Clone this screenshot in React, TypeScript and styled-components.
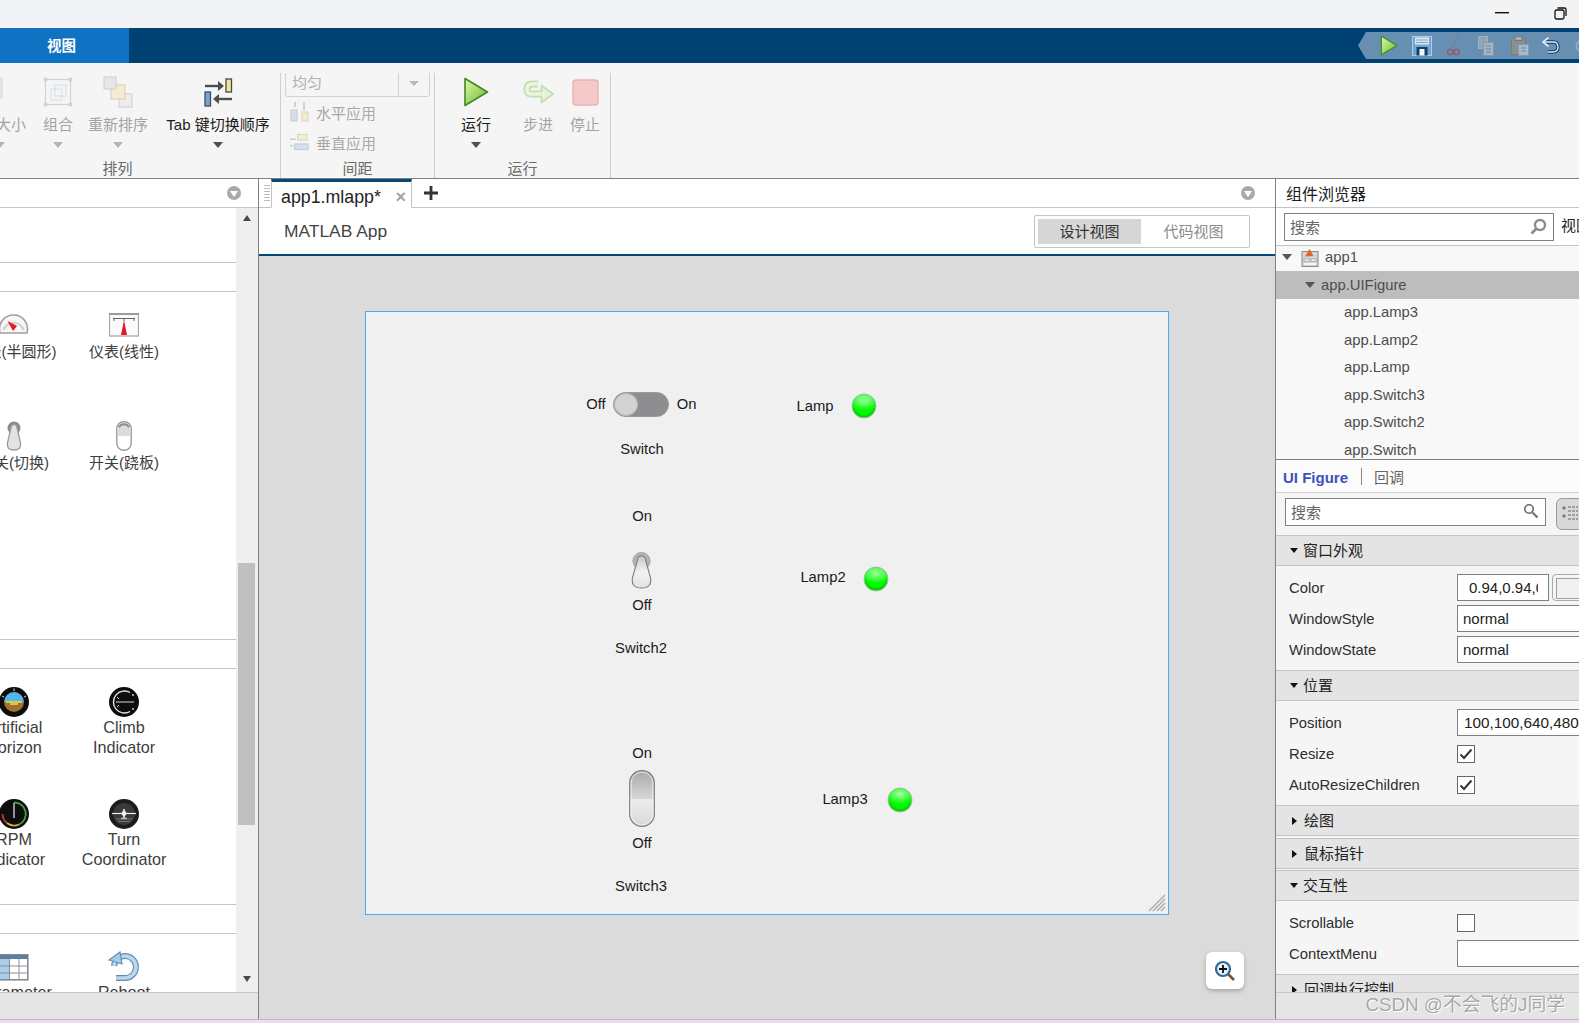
import React from "react";
import styled, { createGlobalStyle } from "styled-components";

const FONT = `"Liberation Sans", "Noto Sans CJK SC", sans-serif`;

const Global = createGlobalStyle`
  html, body { margin: 0; padding: 0; background: #f2f2f4; }
  * { box-sizing: border-box; }
  body { font-family: ${FONT}; }
`;

const Page = styled.div`
  width: 1579px; height: 1023px; overflow: hidden; position: relative;
  display: flex; flex-direction: column; background: #f2f2f4;
`;
const TitleBar = styled.div`
  height: 28px; flex: none; display: flex; justify-content: flex-end; align-items: flex-start;
  background: #f2f3f5;
`;
const WinBtn = styled.div<{ $w: number }>`
  width: ${p => p.$w}px; height: 26px; display: flex; align-items: center; justify-content: center;
`;
const TabBand = styled.div`
  height: 35px; flex: none; background: #004174; display: flex; align-items: stretch; justify-content: space-between;
`;
const RibbonTab = styled.div`
  width: 129px; padding: 0 0 2px 47px; display: flex; align-items: center;
  background: #0f72c2; color: #fff; font-size: 14.5px; font-weight: 700;
`;
const Quick = styled.div`
  width: 221px; height: 27px; margin-top: 4px; background: #668fb2;
  clip-path: polygon(8px 0, 100% 0, 100% 100%, 8px 100%, 0 50%);
  display: flex; align-items: center; padding-left: 22px; overflow: hidden;
`;
const QuickIcon = styled.div<{ $w: number }>`
  width: ${p => p.$w}px; flex: none; display: flex; align-items: center; justify-content: flex-start;
`;
const Ribbon = styled.div`
  height: 116px; flex: none; background: #f5f5f5; border-bottom: 1px solid #808080;
  display: flex; align-items: flex-start;
`;
const Group = styled.div<{ $w: number }>`
  width: ${p => p.$w}px; height: 105px; margin-top: 10px; flex: none;
  border-right: 1px solid #cfcfcf; display: flex; flex-direction: column; overflow: hidden;
`;
const GroupBody = styled.div<{ $end?: boolean }>`
  height: 86px; flex: none; display: flex; align-items: flex-start;
  justify-content: ${p => (p.$end ? "flex-end" : "flex-start")};
`;
const GroupLabel = styled.div<{ $pr?: number }>`
  height: 19px; line-height: 19px; text-align: center; font-size: 15px; color: #6b6b6b;
  padding-right: ${p => p.$pr || 0}px;
`;
const Tool = styled.div<{ $w: number; $off?: boolean }>`
  width: ${p => p.$w}px; flex: none; display: flex; flex-direction: column; align-items: center;
  padding-top: 4px; font-size: 15px; color: ${p => (p.$off ? "#a3a3a3" : "#1c1c1c")};
`;
const ToolIcon = styled.div`
  height: 30px; display: flex; align-items: center; justify-content: center;
`;
const ToolText = styled.div`
  height: 22px; line-height: 22px; margin-top: 7px; white-space: nowrap;
`;
const Caret = styled.div<{ $off?: boolean; $dx?: number }>`
  width: 0; height: 0; margin-top: 6px; margin-left: ${p => p.$dx || 0}px;
  border-left: 5px solid transparent; border-right: 5px solid transparent;
  border-top: 6px solid ${p => (p.$off ? "#b5b5b5" : "#505050")};
`;
const SpacingCol = styled.div`
  padding: 0 0 0 4px; width: 100%; display: flex; flex-direction: column;
`;
const Combo = styled.div`
  width: 145px; height: 28px; margin-top: -4px; border: 1px solid #d2d2d2; border-radius: 3px;
  display: flex; align-items: center; color: #b0b0b0; font-size: 15px;
`;
const ComboText = styled.div`
  flex: 1; padding-left: 6px; border-right: 1px solid #d2d2d2; height: 100%; line-height: 26px;
`;
const ComboCaret = styled.div`
  width: 30px; display: flex; justify-content: center;
  &::after { content: ""; border-left: 5px solid transparent; border-right: 5px solid transparent; border-top: 5px solid #b8b8b8; }
`;
const SpaceRow = styled.div`
  height: 30px; display: flex; align-items: center; gap: 7px; padding-left: 5px; color: #a8a8a8; font-size: 15px;
  &:first-of-type { margin-top: 2px; }
`;

const Main = styled.div`
  height: 840px; flex: none; display: flex; background: #fff;
`;
const LeftPanel = styled.div`
  width: 259px; flex: none; border-right: 1px solid #808080; display: flex; flex-direction: column;
`;
const PanelHead = styled.div`
  height: 29px; flex: none; border-bottom: 1px solid #c4c4c4; display: flex; align-items: center; justify-content: flex-end;
  padding-right: 17px; background: #fff;
`;
const DropDot = styled.div`
  width: 14px; height: 14px; border-radius: 50%; background: #a9a9a9; display: flex; align-items: center; justify-content: center;
  &::after { content: ""; margin-top: 2px; border-left: 4px solid transparent; border-right: 4px solid transparent; border-top: 6px solid #fff; }
`;
const LeftBody = styled.div`
  flex: 1; min-height: 0; display: flex;
`;
const Palette = styled.div`
  width: 236px; flex: none; overflow: hidden; display: flex; flex-direction: column; background: #fff;
`;
const Band = styled.div<{ $h: number }>`
  height: ${p => p.$h}px; flex: none; border-bottom: 1px solid #c4c4c4;
`;
const Shelf = styled.div<{ $h: number; $row: number }>`
  width: 277px; margin-left: -41px; height: ${p => p.$h}px; flex: none; border-bottom: 1px solid #c4c4c4; padding-top: 18px; overflow: hidden;
  display: grid; grid-template-columns: 110px 110px; grid-auto-rows: ${p => p.$row}px;
`;
const Part = styled.div`
  display: flex; flex-direction: column; align-items: center; color: #3d3d3d;
`;
const PartIcon = styled.div`
  height: 30px; display: flex; align-items: center; justify-content: center;
`;
const PartLabel = styled.div<{ $latin?: boolean }>`
  margin-top: ${p => (p.$latin ? 0 : 2)}px; line-height: 20px; text-align: center; white-space: pre-line; font-size: ${p => (p.$latin ? 16.2 : 15)}px;
`;
const ScrollBar = styled.div`
  width: 22px; flex: none; background: #efefef; padding: 0 3px 0 2px; display: flex; flex-direction: column; align-items: center; position: relative;
`;
const ScrollArrow = styled.div<{ $down?: boolean }>`
  width: 0; height: 0; flex: none; border-left: 4.5px solid transparent; border-right: 4.5px solid transparent;
  ${p => (p.$down ? "border-top: 6px solid #4a4a4a;" : "border-bottom: 6px solid #4a4a4a;")}
  margin-top: ${p => (p.$down ? 151 : 7)}px;
`;
const ScrollThumb = styled.div`
  width: 17px; height: 262px; flex: none; margin-top: 342px; background: #c0c0c0;
`;
const StatusBar = styled.div`
  height: 27px; flex: none; background: #e5e5e5; border-top: 1px solid #c8c8c8;
`;

const Center = styled.div`
  flex: 1; min-width: 0; display: flex; flex-direction: column; background: #dbdbdb;
`;
const TabBar = styled.div`
  height: 29px; flex: none; background: #fff; border-bottom: 1px solid #c4c4c4; display: flex; align-items: stretch; padding-left: 3px;
`;
const Grip = styled.div`
  width: 9px; margin-right: 0; background: repeating-linear-gradient(#bdbdbd 0 1px, transparent 1px 3px) center 6px / 6px 16px no-repeat;
`;
const DocTab = styled.div`
  width: 141px; height: 29px; border: 1px solid #c4c4c4; border-bottom: 1px solid #fff; border-top: 3px solid #004a7c; display: flex; align-items: center;
  padding: 5px 5px 0 9px; font-size: 17.8px; color: #222; justify-content: space-between; white-space: nowrap;
`;
const DocClose = styled.span`
  font-size: 18px; line-height: 18px; color: #a4a4a4; font-weight: 700;
`;
const Plus = styled.div`
  width: 38px; display: flex; align-items: center; justify-content: center;
`;
const TabSpacer = styled.div`
  flex: 1; display: flex; justify-content: flex-end; align-items: center; padding-right: 20px;
`;
const AppHead = styled.div`
  height: 48px; flex: none; background: #fff; border-bottom: 2px solid #004a7c; display: flex; align-items: center; justify-content: space-between;
  padding: 0 25px; color: #444; font-size: 17.4px;
`;
const ViewSwitch = styled.div`
  width: 216px; height: 33px; border: 1px solid #c4c4c4; border-radius: 2px; padding: 3px; display: flex; font-size: 15px; background: #fff;
`;
const ViewBtn = styled.div<{ $on?: boolean }>`
  width: 103px; display: flex; align-items: center; justify-content: center; padding-bottom: 2px;
  background: ${p => (p.$on ? "#d6d6d6" : "transparent")}; color: ${p => (p.$on ? "#333" : "#8c8c8c")};
  &:last-child { flex: 1; }
`;
const Stage = styled.div`
  flex: 1; min-height: 0; padding: 55px 107px 0 106px; position: relative;
`;
const Figure = styled.div`
  width: 804px; height: 604px; border: 1px solid #4ba9ef; background: #f0f0f0; position: relative;
`;
const CanvasText = styled.div<{ $x: number; $y: number }>`
  position: absolute; left: ${p => p.$x}px; top: ${p => p.$y}px; transform: translate(-50%, -50%);
  font-size: 14.8px; color: #1a1a1a; white-space: nowrap;
`;
const Lamp = styled.div<{ $x: number; $y: number }>`
  position: absolute; left: ${p => p.$x}px; top: ${p => p.$y}px; transform: translate(-50%, -50%);
  width: 25px; height: 25px; border-radius: 50%; border: 1px solid #b3b8b3;
  background: radial-gradient(ellipse 72% 46% at 50% 24%, #a8ffa8 0%, #30ff30 65%, #00f800 100%), #00f000;
  box-shadow: inset 0 -2px 2px #00c800;
`;
const Slide = styled.div<{ $x: number; $y: number }>`
  position: absolute; left: ${p => p.$x}px; top: ${p => p.$y}px;
  width: 56px; height: 25px; border-radius: 13px; background: #8e8e91; border: 1px solid #9a9a9a;
`;
const SlideKnob = styled.div`
  width: 24px; height: 23px; border-radius: 50%; background: #d2d2d4; border: 1px solid #b5b5b5;
`;
const Placed = styled.div<{ $x: number; $y: number }>`
  position: absolute; left: ${p => p.$x}px; top: ${p => p.$y}px; line-height: 0;
`;
const Grab = styled.div`
  position: absolute; right: 2px; bottom: 2px; line-height: 0;
`;
const ZoomBtn = styled.div`
  position: absolute; left: 947px; top: 696px; width: 38px; height: 37px; border-radius: 6px; background: #fff;
  box-shadow: 0 2px 4px rgba(0,0,0,.25); display: flex; align-items: center; justify-content: center;
`;

const RightPanel = styled.div`
  width: 304px; flex: none; border-left: 1px solid #808080; display: flex; flex-direction: column; background: #f5f5f5; overflow: hidden;
`;
const BrowserHead = styled.div`
  height: 29px; flex: none; background: #fff; border-bottom: 1px solid #c4c4c4; padding: 0 0 0 10px; display: flex; align-items: center;
  font-size: 16px; color: #1c1c1c;
`;
const SearchRow = styled.div`
  height: 38px; flex: none; background: #fff; border-bottom: 1px solid #c4c4c4; padding: 5px 0 0 8px; display: flex; gap: 7px; font-size: 15px;
`;
const SearchBox = styled.div<{ $w: number }>`
  width: ${p => p.$w}px; height: 28px; flex: none; border: 1px solid #808080; background: #fff; display: flex; align-items: center; justify-content: space-between;
  padding: 0 6px 2px 5px; color: #666; font-size: 15px;
`;
const ViewLabel = styled.div`
  color: #222; line-height: 26px; white-space: nowrap;
`;
const Tree = styled.div`
  height: 214px; flex: none; overflow: hidden; background: #f8f8f8; border-bottom: 1px solid #808080;
`;
const TreeRow = styled.div<{ $pad: number; $sel?: boolean; $h?: number }>`
  height: ${p => p.$h || 27.5}px; display: flex; align-items: center; gap: 6px; padding: ${p => (p.$h ? "0 0 3px" : "0")} 0 ${p => (p.$h ? "" : "0")};
  padding-left: ${p => p.$pad}px;
  font-size: 14.8px; color: #4d4d4d; background: ${p => (p.$sel ? "#bdbdbd" : "transparent")};
`;
const TreeCaret = styled.div`
  width: 0; height: 0; border-left: 5px solid transparent; border-right: 5px solid transparent; border-top: 6px solid #555;
`;
const NodeIcon = styled.div`
  margin-left: 3px; line-height: 0;
`;
const InspectTabs = styled.div`
  height: 33px; flex: none; background: #fcfcfc; border-bottom: 1px solid #d0d0d0; display: flex; align-items: center; padding-left: 7px; font-size: 15px;
`;
const TabOn = styled.div`
  color: #3c50bd; font-weight: 700; padding: 2px 13px 0 0; border-right: 1px solid #888; line-height: 15px;
`;
const TabOff = styled.div`
  color: #666; padding-left: 12px;
`;
const InspectSearch = styled.div`
  height: 42px; flex: none; padding: 5px 0 0 9px; display: flex; gap: 10px; background: #f5f5f5;
`;
const LayoutBtn = styled.div`
  width: 40px; height: 32px; flex: none; border: 1px solid #9a9a9a; border-radius: 6px; background: #d8d8d8; display: flex; align-items: center; padding-left: 5px;
`;
const Section = styled.div<{ $gap?: number }>`
  height: 31px; flex: none; background: #e4e4e4; border-top: 1px solid #c4c4c4; border-bottom: 1px solid #c4c4c4; display: flex; align-items: center; gap: 5px;
  padding: 0 0 3px 14px; font-size: 15px; color: #222; margin-bottom: ${p => p.$gap || 0}px;
`;
const Tri = styled.div<{ $open: boolean }>`
  width: 0; height: 0; flex: none; margin-top: 3px;
  ${p => p.$open
    ? "border-left: 4px solid transparent; border-right: 4px solid transparent; border-top: 5px solid #111;"
    : "margin-left: 2px; margin-right: 2px; border-top: 4.5px solid transparent; border-bottom: 4.5px solid transparent; border-left: 5px solid #111;"}
`;
const PropList = styled.div`
  flex: none; padding: 8px 0 7px 13px; display: flex; flex-direction: column; gap: 4px;
`;
const Prop = styled.div`
  height: 27px; display: grid; grid-template-columns: 168px 1fr; align-items: center; font-size: 14.8px; color: #2e2e2e;
`;
const ValueWrap = styled.div`
  display: flex; gap: 3px; height: 27px; align-items: stretch;
`;
const Value = styled.div<{ $w?: number; $pad?: number; $fs?: number }>`
  width: ${p => p.$w || 140}px; flex: none; border: 1px solid #808080; background: #fff; color: #222; white-space: nowrap;
  line-height: 25px; padding: 0 10px 0 ${p => p.$pad ?? 5}px; font-size: ${p => p.$fs || 15}px;
`;
const ClipText = styled.div`
  overflow: hidden;
`;
const Swatch = styled.div`
  width: 34px; flex: none; border: 1px solid #aaa; border-radius: 4px; padding: 3px 0 3px 3px; background: #f5f5f5;
  &::after { content: ""; display: block; width: 22px; height: 100%; border: 1px solid #a0a0a0; background: #f0f0f0; }
`;
const Check = styled.div`
  width: 18px; height: 18px; border: 1px solid #666; background: #fff; display: flex; align-items: center; justify-content: center;
`;
const RightScroll = styled.div`
  flex: 1; min-height: 0; overflow: hidden; display: flex; flex-direction: column;
`;
const BottomRule = styled.div`
  height: 1px; flex: none; background: #b9b9b9;
`;
const BottomStrip = styled.div`
  flex: 1; background: #eedcf1;
`;
const Watermark = styled.div`
  position: absolute; right: 14px; bottom: 7px; font-size: 18.8px; color: #a6a6a6; white-space: nowrap;
  text-shadow: 0 0 1px #fff, 1px 1px 0 #fff;
`;

/* ---------- drawings ---------- */
const PlayIcon = ({ w, h, id }: { w: number; h: number; id: string }) => (
  <svg width={w} height={h} viewBox="0 0 26 30">
    <defs>
      <linearGradient id={id} x1="0" y1="0" x2="1" y2="1">
        <stop offset="0" stopColor="#e4f8a8" />
        <stop offset="1" stopColor="#62b82c" />
      </linearGradient>
    </defs>
    <path d="M2 1.5 L24.5 15 L2 28.5 Z" fill={`url(#${id})`} stroke="#3e8a24" strokeWidth="1.6" strokeLinejoin="round" />
  </svg>
);
const SizeStub = () => (
  <svg width="24" height="30" viewBox="0 0 24 30">
    <rect x="0" y="1" width="3" height="20" fill="#e6e6e6" stroke="#cfcfcf" strokeWidth=".8" />
  </svg>
);
const GroupIcon = () => (
  <svg width="30" height="30" viewBox="0 0 30 30" opacity=".6">
    <rect x="2.5" y="2.5" width="25" height="25" fill="#f2f4f6" stroke="#b4bfcc" strokeWidth="1.2" />
    {[[2.5, 2.5], [27.5, 2.5], [2.5, 27.5], [27.5, 27.5]].map(([x, y]) => (
      <rect key={`${x}${y}`} x={x - 1.8} y={y - 1.8} width="3.6" height="3.6" fill="#b0bccb" />
    ))}
    <rect x="8" y="12" width="11" height="11" fill="none" stroke="#c8cdd4" />
    <rect x="12" y="8" width="11" height="11" fill="none" stroke="#c8cdd4" />
  </svg>
);
const ReorderIcon = () => (
  <svg width="31" height="32" viewBox="0 0 31 32">
    <rect x="16" y="18" width="13" height="13" fill="#ececec" stroke="#cfcfcf" />
    <rect x="8" y="9" width="14" height="14" fill="#f4ecd0" stroke="#d8d0b0" />
    <rect x="1" y="1" width="12" height="12" fill="#e6e6e6" stroke="#cfcfcf" />
  </svg>
);
const TabOrderIcon = () => (
  <svg width="29" height="29" viewBox="0 0 29 29">
    <path d="M1 8 H15" stroke="#4d4d4d" strokeWidth="2.4" />
    <path d="M14 3 L20 8 L14 13 Z" fill="#4d4d4d" />
    <rect x="22" y="1" width="5.5" height="13" fill="#f1e2a6" stroke="#4d4a38" strokeWidth="1.3" />
    <path d="M28 21 H14" stroke="#4d4d4d" strokeWidth="2.4" />
    <path d="M15 16 L9 21 L15 26 Z" fill="#4d4d4d" />
    <rect x="1" y="14" width="5.5" height="14" fill="#7fa2c6" stroke="#34506c" strokeWidth="1.3" />
  </svg>
);
const HApplyIcon = () => (
  <svg width="19" height="20" viewBox="0 0 19 20" opacity=".55">
    <path d="M5 0 V5 M14 0 V8" stroke="#999" strokeWidth="1.4" />
    <rect x="1" y="8" width="6" height="11" fill="#bcd0e4" stroke="#93a6ba" />
    <rect x="12" y="10" width="6" height="9" fill="#f2e6b8" stroke="#c2b88e" />
  </svg>
);
const VApplyIcon = () => (
  <svg width="19" height="19" viewBox="0 0 20 19" opacity=".55">
    <path d="M0 6 H6 M0 13 H3" stroke="#999" strokeWidth="1.4" />
    <rect x="8" y="1" width="10" height="6" fill="#f2e6b8" stroke="#c2b88e" />
    <rect x="5" y="11" width="14" height="6" fill="#bcd0e4" stroke="#93a6ba" />
  </svg>
);
const StepIcon = () => (
  <svg width="31" height="27" viewBox="0 0 31 27" fill="none">
    <path d="M15 5 H9 Q4 5 4 10 V11 Q4 15 9 15 H21" stroke="#c4deb2" strokeWidth="7" />
    <path d="M18.5 6.5 L30 15 L18.5 23.5 Z" fill="#e6f3da" stroke="#c4deb2" strokeWidth="1.8" strokeLinejoin="round" />
    <path d="M15 5 H9 Q4 5 4 10 V11 Q4 15 9 15 H21" stroke="#eaf5e0" strokeWidth="3.6" />
  </svg>
);
const StopIcon = () => (
  <svg width="27" height="27" viewBox="0 0 27 27">
    <rect x="1" y="1" width="25" height="25" rx="3" fill="#f4c9c9" stroke="#e8b4b4" strokeWidth="1.5" />
  </svg>
);
const SaveIcon = () => (
  <svg width="20" height="20" viewBox="0 0 20 20">
    <rect x="0.5" y="0.5" width="19" height="19" fill="#6fa6d6" stroke="#a8d0ee" />
    <rect x="3" y="1.5" width="14" height="7" fill="#dfe9f2" />
    <path d="M4 4 H16 M4 6.5 H16" stroke="#7fa0bf" />
    <rect x="4.5" y="11" width="11" height="8.5" fill="#143f6a" />
    <rect x="7.5" y="13" width="5" height="6.5" fill="#f4f8fb" />
  </svg>
);
const CutIcon = () => (
  <svg width="13" height="20" viewBox="0 0 13 20" fill="none" stroke="#93566f" strokeWidth="1.3">
    <path d="M10.5 0 L4.5 13" stroke="#7d8188" />
    <circle cx="3.2" cy="16" r="2.6" />
    <circle cx="9.6" cy="16" r="2.6" />
  </svg>
);
const CopyIcon = () => (
  <svg width="16" height="20" viewBox="0 0 16 20">
    <rect x="0.5" y="0.5" width="9" height="12" fill="#8ea5ba" stroke="#9fb0c0" />
    <rect x="5.5" y="6.5" width="10" height="13" fill="#a3b6c8" stroke="#8598a9" />
    <path d="M8 10 H13 M8 13 H13 M8 16 H13" stroke="#6f8497" />
  </svg>
);
const PasteIcon = () => (
  <svg width="18" height="20" viewBox="0 0 18 20">
    <rect x="0.5" y="2.5" width="14" height="16" rx="1" fill="#8d8f8c" stroke="#7a7c7a" />
    <rect x="4" y="0.5" width="7" height="4" fill="#a5b0b9" stroke="#6f7a84" />
    <rect x="7.5" y="8.5" width="10" height="11" fill="#a8bbcc" stroke="#8598a9" />
    <path d="M10 12 H15 M10 15 H15" stroke="#6f8497" />
  </svg>
);
const UndoIcon = () => (
  <svg width="18" height="17" viewBox="0 0 18 17" fill="none">
    <path d="M2 5 H11 Q16 5 16 10 Q16 15 11 15 H6" stroke="#12395e" strokeWidth="3.4" />
    <path d="M2 5 H11 Q16 5 16 10 Q16 15 11 15 H6" stroke="#dbeaf6" strokeWidth="1.4" />
    <path d="M6.5 0.5 L1 5 L6.5 9.5" stroke="#dbeaf6" strokeWidth="1.8" />
  </svg>
);
const RedoHint = () => (
  <svg width="10" height="17" viewBox="0 0 10 17" fill="none">
    <circle cx="9" cy="9" r="6.5" stroke="#8fa9c2" strokeWidth="2" />
  </svg>
);
const DocGauge = () => (
  <svg width="30" height="30" viewBox="0 0 30 30">
    <path d="M1.1 23 A14 14 0 1 1 27.9 23 Z" fill="#f6f6f6" stroke="#a0a0a0" strokeWidth="1.6" />
    <path d="M4.5 20 A10.5 10.5 0 0 1 24.5 20" fill="none" stroke="#cfcfcf" strokeWidth="2" />
    <path d="M8.5 11 L18 16 L14 21 Z" fill="#e8172c" />
  </svg>
);
const LinearGauge = () => (
  <svg width="30" height="30" viewBox="0 0 30 30">
    <rect x="0.5" y="4" width="29" height="22" fill="#fbfbfb" stroke="#a8a8a8" strokeWidth="1.3" />
    <path d="M0 4 H30" stroke="#909090" strokeWidth="1.6" />
    <path d="M4 8.5 H26 M5 8.5 V11 M15 8.5 V11 M25 8.5 V11" stroke="#666" fill="none" />
    <path d="M15 10 L18 25 H12 Z" fill="#e8172c" />
  </svg>
);
const TogglePart = () => (
  <svg width="16" height="30" viewBox="0 0 16 30">
    <circle cx="8" cy="7" r="6.5" fill="#8a8a8a" />
    <path d="M5 7 Q5 3.5 8 3.5 Q11 3.5 11 7 L14.6 22 Q15.5 29 8 29 Q0.5 29 1.4 22 Z" fill="#e2e2e2" stroke="#9a9a9a" strokeWidth="1.3" />
  </svg>
);
const RockerPart = () => (
  <svg width="16" height="30" viewBox="0 0 16 30">
    <rect x="0.8" y="0.8" width="14.4" height="28.4" rx="7" fill="#fff" stroke="#9a9a9a" strokeWidth="1.4" />
    <path d="M1.5 15 V8 A6.5 6.5 0 0 1 14.5 8 V15 Z" fill="#dcdcdc" />
    <path d="M3 6 A6 6 0 0 1 13 6" fill="none" stroke="#8a8a8a" strokeWidth="2" />
  </svg>
);
const Dial = ({ kind }: { kind: "horizon" | "climb" | "rpm" | "turn" }) => (
  <svg width="30" height="30" viewBox="0 0 30 30">
    <circle cx="15" cy="15" r="15" fill={kind === "turn" ? "#1c1c1c" : "#0d0d0d"} />
    {kind === "horizon" && (
      <>
        <path d="M5 15 A10 10 0 0 1 25 15 Z" fill="#56b6e8" />
        <path d="M5 15 A10 10 0 0 0 25 15 Z" fill="#a4702e" />
        <path d="M7 15 H23 M11 17 H19" stroke="#ece04c" strokeWidth="1.5" />
        <path d="M15 1.5 V4 M3 9 L5 10 M27 9 L25 10" stroke="#ddd" />
      </>
    )}
    {kind === "climb" && (
      <>
        <path d="M21 5.5 A11 11 0 1 0 21 24.5" fill="none" stroke="#e6e6e6" strokeWidth="1.4" />
        <path d="M7 15 H25 M8 10 L10 12 M8 20 L10 18" stroke="#d8d8d8" />
        <circle cx="24" cy="8" r=".9" fill="#ddd" />
        <circle cx="24" cy="22" r=".9" fill="#ddd" />
      </>
    )}
    {kind === "rpm" && (
      <>
        <path d="M15 3.5 A11.5 11.5 0 0 1 20 25.5" fill="none" stroke="#3fa63b" strokeWidth="1.8" />
        <path d="M20 25.5 A11.5 11.5 0 0 1 8 24" fill="none" stroke="#d8b52a" strokeWidth="1.8" />
        <path d="M8 24 A11.5 11.5 0 0 1 3.5 15" fill="none" stroke="#b83a2a" strokeWidth="1.8" />
        <path d="M15 4 V19" stroke="#eee" strokeWidth="1.2" />
      </>
    )}
    {kind === "turn" && (
      <>
        <circle cx="15" cy="15" r="11" fill="#3a3a3a" />
        <path d="M3 14.5 H27" stroke="#eee" strokeWidth="1.2" />
        <path d="M15 10 V20 M12 19.5 H18" stroke="#f4f4f4" strokeWidth="1.6" />
        <path d="M7 20 H23 M9 22.5 H21" stroke="#777" />
        <circle cx="15" cy="14.5" r="2.4" fill="#f4f4f4" />
      </>
    )}
  </svg>
);
const TablePart = () => (
  <svg width="30" height="30" viewBox="0 0 30 30">
    <rect x="0.8" y="2.8" width="28" height="25" fill="#fff" stroke="#7d8590" strokeWidth="1.5" />
    <rect x="1" y="3" width="28" height="4" fill="#5d7fa0" />
    <rect x="1" y="7" width="10" height="20" fill="#aacdea" />
    <path d="M10.5 7 V27 M20 7 V27 M1 14 H29 M1 21 H29" stroke="#8a8f96" />
  </svg>
);
const ResetPart = () => (
  <svg width="32" height="32" viewBox="0 0 32 32" fill="none">
    <path d="M6 15 A11 11 0 1 1 16 27 L8 27" stroke="#5f8fb8" strokeWidth="6" />
    <path d="M6 15 A11 11 0 1 1 16 27 L8 27" stroke="#bcd6ea" strokeWidth="3.6" />
    <path d="M12 1 L1 9 L14 13 Z" fill="#a9cbe6" stroke="#5f8fb8" strokeWidth="1.2" />
  </svg>
);
const AppNodeIcon = () => (
  <svg width="18" height="19" viewBox="0 0 18 19">
    <rect x="1" y="3.5" width="16" height="15" fill="#d6d6d6" stroke="#8a8a8a" />
    <rect x="3" y="11" width="5.5" height="2.5" fill="#f4f4f4" stroke="#8a8a8a" strokeWidth=".6" />
    <rect x="10" y="11" width="5" height="2.5" fill="#f4f4f4" stroke="#8a8a8a" strokeWidth=".6" />
    <rect x="3" y="15" width="12" height="2" fill="#f4f4f4" />
    <path d="M4 8.5 L8.5 1 L12.5 8 Z" fill="#e0662a" />
  </svg>
);
const Glass = ({ s = 17, c = "#8c8c8c" }: { s?: number; c?: string }) => (
  <svg width={s} height={s} viewBox="0 0 17 17" fill="none">
    <circle cx="10" cy="7" r="5" stroke={c} strokeWidth="2.4" />
    <path d="M6 11 L1.5 15.5" stroke={c} strokeWidth="2.8" />
  </svg>
);
const Glass2 = () => (
  <svg width="16" height="16" viewBox="0 0 16 16" fill="none">
    <circle cx="6" cy="6" r="4.2" stroke="#666" strokeWidth="1.6" />
    <path d="M9.5 9.5 L14.5 14.5" stroke="#777" strokeWidth="2.4" />
  </svg>
);
const ListGlyph = () => (
  <svg width="16" height="18" viewBox="0 0 16 18" fill="none" stroke="#666">
    <path d="M0 3 H4 M2 1 V5 M0 11 H4 M2 9 V13" />
    <path d="M6 2 H16 M6 6 H16 M6 10 H16 M6 14 H16" strokeDasharray="3 1" />
  </svg>
);
const Tick = () => (
  <svg width="14" height="12" viewBox="0 0 14 12" fill="none">
    <path d="M1.5 6.5 L5 10 L12.5 1.5" stroke="#333" strokeWidth="2" />
  </svg>
);
const VerticalToggle = () => (
  <svg width="21" height="37" viewBox="0 0 21 37">
    <defs>
      <linearGradient id="vt" x1="0" y1="0" x2="0" y2="1">
        <stop offset="0" stopColor="#c8c8c8" />
        <stop offset=".5" stopColor="#f2f2f2" />
        <stop offset="1" stopColor="#e2e2e2" />
      </linearGradient>
    </defs>
    <circle cx="10.5" cy="9" r="8.6" fill="#b4b4b4" stroke="#a6a6a6" />
    <path d="M6.5 8 Q6.5 4 10.5 4 Q14.5 4 14.5 8 L19.6 26 Q21 36 10.5 36 Q0 36 1.4 26 Z" fill="url(#vt)" stroke="#7d7d7d" strokeWidth="1.1" />
  </svg>
);
const RockerSwitch = () => (
  <svg width="26" height="57" viewBox="0 0 26 57">
    <defs>
      <linearGradient id="rk" x1="0" y1="0" x2="0" y2="1">
        <stop offset="0" stopColor="#a8a8a8" />
        <stop offset=".5" stopColor="#d6d6d6" />
        <stop offset=".52" stopColor="#ececec" />
        <stop offset="1" stopColor="#d8d8d8" />
      </linearGradient>
    </defs>
    <rect x="0.7" y="0.7" width="24.6" height="55.6" rx="12" fill="url(#rk)" stroke="#808080" strokeWidth="1.2" />
    <rect x="2.2" y="2.2" width="21.6" height="52.6" rx="10.5" fill="none" stroke="#f4f4f4" strokeWidth=".8" />
  </svg>
);
const ResizeGrip = () => (
  <svg width="18" height="18" viewBox="0 0 18 18" stroke="#a8a8a8" strokeWidth="1.3">
    <path d="M1 17 L17 1 M5 17 L17 5 M9 17 L17 9 M13 17 L17 13" />
  </svg>
);
const ZoomGlass = () => (
  <svg width="22" height="22" viewBox="0 0 22 22" fill="none">
    <path d="M13.5 13.5 L20 20" stroke="#7a5230" strokeWidth="2.6" />
    <circle cx="9" cy="9" r="7" fill="#e8f0f7" stroke="#2f6a9f" strokeWidth="2.2" />
    <path d="M5 9 H13 M9 5 V13" stroke="#111" strokeWidth="1.8" />
  </svg>
);

/* ---------- data ---------- */
const FIG_X = 366;
const FIG_Y = 312;
const labels: [string, number, number][] = [
  ["Off", 596, 404], ["On", 686.5, 404], ["Switch", 642, 449], ["Lamp", 815, 406],
  ["On", 642, 516], ["Off", 642, 605], ["Switch2", 641, 648], ["Lamp2", 823, 577],
  ["On", 642, 753], ["Off", 642, 843], ["Switch3", 641, 886], ["Lamp3", 845, 799],
];
const lamps: [number, number][] = [[864, 406], [876, 578.5], [899.5, 800]];
const treeKids = ["app.Lamp3", "app.Lamp2", "app.Lamp", "app.Switch3", "app.Switch2", "app.Switch"];

export default function App() {
  return (
    <Page>
      <Global />
      <TitleBar>
        <WinBtn $w={78}>
          <svg width="14" height="2" viewBox="0 0 14 2"><rect width="14" height="1.4" fill="#111" /></svg>
        </WinBtn>
        <WinBtn $w={38}>
          <svg width="13" height="13" viewBox="0 0 13 13" fill="none" stroke="#111" strokeWidth="1.3">
            <rect x="1" y="3" width="9" height="9" rx="1.5" />
            <path d="M3.5 1 H10.5 Q12 1 12 2.5 V9" />
          </svg>
        </WinBtn>
      </TitleBar>
      <TabBand>
        <RibbonTab>视图</RibbonTab>
        <Quick>
          <QuickIcon $w={32}><PlayIcon w={18} h={21} id="pq" /></QuickIcon>
          <QuickIcon $w={35}><SaveIcon /></QuickIcon>
          <QuickIcon $w={31}><CutIcon /></QuickIcon>
          <QuickIcon $w={33}><CopyIcon /></QuickIcon>
          <QuickIcon $w={31}><PasteIcon /></QuickIcon>
          <QuickIcon $w={32}><UndoIcon /></QuickIcon>
          <QuickIcon $w={10}><RedoHint /></QuickIcon>
        </Quick>
      </TabBand>
      <Ribbon>
        <Group $w={281}>
          <GroupBody $end>
            <Tool $w={50} $off><ToolIcon><SizeStub /></ToolIcon><ToolText>大小</ToolText><Caret $off $dx={-22} /></Tool>
            <Tool $w={44} $off><ToolIcon><GroupIcon /></ToolIcon><ToolText>组合</ToolText><Caret $off /></Tool>
            <Tool $w={76} $off><ToolIcon><ReorderIcon /></ToolIcon><ToolText>重新排序</ToolText><Caret $off /></Tool>
            <Tool $w={124}><ToolIcon><TabOrderIcon /></ToolIcon><ToolText>Tab 键切换顺序</ToolText><Caret /></Tool>
          </GroupBody>
          <GroupLabel $pr={45}>排列</GroupLabel>
        </Group>
        <Group $w={154}>
          <GroupBody>
            <SpacingCol>
              <Combo><ComboText>均匀</ComboText><ComboCaret /></Combo>
              <SpaceRow><HApplyIcon />水平应用</SpaceRow>
              <SpaceRow><VApplyIcon />垂直应用</SpaceRow>
            </SpacingCol>
          </GroupBody>
          <GroupLabel>间距</GroupLabel>
        </Group>
        <Group $w={176}>
          <GroupBody>
            <Tool $w={82}><ToolIcon><PlayIcon w={26} h={30} id="pr" /></ToolIcon><ToolText>运行</ToolText><Caret /></Tool>
            <Tool $w={42} $off><ToolIcon><StepIcon /></ToolIcon><ToolText>步进</ToolText></Tool>
            <Tool $w={52} $off><ToolIcon><StopIcon /></ToolIcon><ToolText>停止</ToolText></Tool>
          </GroupBody>
          <GroupLabel>运行</GroupLabel>
        </Group>
      </Ribbon>
      <Main>
        <LeftPanel>
          <PanelHead><DropDot /></PanelHead>
          <LeftBody>
            <Palette>
              <Band $h={55} />
              <Band $h={29} />
              <Shelf $h={348} $row={111}>
                <Part><PartIcon><DocGauge /></PartIcon><PartLabel>仪表(半圆形)</PartLabel></Part>
                <Part><PartIcon><LinearGauge /></PartIcon><PartLabel>仪表(线性)</PartLabel></Part>
                <Part><PartIcon><TogglePart /></PartIcon><PartLabel>开关(切换)</PartLabel></Part>
                <Part><PartIcon><RockerPart /></PartIcon><PartLabel>开关(跷板)</PartLabel></Part>
              </Shelf>
              <Band $h={29} />
              <Shelf $h={236} $row={112}>
                <Part><PartIcon><Dial kind="horizon" /></PartIcon><PartLabel $latin>{"Artificial\nHorizon"}</PartLabel></Part>
                <Part><PartIcon><Dial kind="climb" /></PartIcon><PartLabel $latin>{"Climb\nIndicator"}</PartLabel></Part>
                <Part><PartIcon><Dial kind="rpm" /></PartIcon><PartLabel $latin>{"RPM\nIndicator"}</PartLabel></Part>
                <Part><PartIcon><Dial kind="turn" /></PartIcon><PartLabel $latin>{"Turn\nCoordinator"}</PartLabel></Part>
              </Shelf>
              <Band $h={29} />
              <Shelf $h={59} $row={60}>
                <Part><PartIcon><TablePart /></PartIcon><PartLabel $latin>Parameter</PartLabel></Part>
                <Part><PartIcon><ResetPart /></PartIcon><PartLabel $latin>Reboot</PartLabel></Part>
              </Shelf>
            </Palette>
            <ScrollBar>
              <ScrollArrow />
              <ScrollThumb />
              <ScrollArrow $down />
            </ScrollBar>
          </LeftBody>
          <StatusBar />
        </LeftPanel>
        <Center>
          <TabBar>
            <Grip />
            <DocTab>app1.mlapp*<DocClose>×</DocClose></DocTab>
            <Plus>
              <svg width="14" height="14" viewBox="0 0 14 14"><path d="M7 0 V14 M0 7 H14" stroke="#333" strokeWidth="2.8" /></svg>
            </Plus>
            <TabSpacer><DropDot /></TabSpacer>
          </TabBar>
          <AppHead>
            MATLAB App
            <ViewSwitch>
              <ViewBtn $on>设计视图</ViewBtn>
              <ViewBtn>代码视图</ViewBtn>
            </ViewSwitch>
          </AppHead>
          <Stage>
            <Figure>
              {labels.map(([t, x, y]) => (
                <CanvasText key={`${t}${x}${y}`} $x={x - FIG_X} $y={y - FIG_Y}>{t}</CanvasText>
              ))}
              {lamps.map(([x, y]) => (
                <Lamp key={x} $x={x - FIG_X} $y={y - FIG_Y} />
              ))}
              <Slide $x={613 - FIG_X} $y={392 - FIG_Y}><SlideKnob /></Slide>
              <Placed $x={631 - FIG_X} $y={552 - FIG_Y}><VerticalToggle /></Placed>
              <Placed $x={629 - FIG_X} $y={770 - FIG_Y}><RockerSwitch /></Placed>
              <Grab><ResizeGrip /></Grab>
            </Figure>
            <ZoomBtn><ZoomGlass /></ZoomBtn>
          </Stage>
        </Center>
        <RightPanel>
          <BrowserHead>组件浏览器</BrowserHead>
          <SearchRow>
            <SearchBox $w={270}>搜索<Glass /></SearchBox>
            <ViewLabel>视图</ViewLabel>
          </SearchRow>
          <Tree>
            <TreeRow $pad={6} $h={25}><TreeCaret /><NodeIcon><AppNodeIcon /></NodeIcon>app1</TreeRow>
            <TreeRow $pad={29} $sel><TreeCaret />app.UIFigure</TreeRow>
            {treeKids.map(k => <TreeRow key={k} $pad={68}>{k}</TreeRow>)}
          </Tree>
          <InspectTabs><TabOn>UI Figure</TabOn><TabOff>回调</TabOff></InspectTabs>
          <InspectSearch>
            <SearchBox $w={261}>搜索<Glass2 /></SearchBox>
            <LayoutBtn><ListGlyph /></LayoutBtn>
          </InspectSearch>
          <RightScroll>
            <Section><Tri $open />窗口外观</Section>
            <PropList>
              <Prop>Color<ValueWrap><Value $w={92} $pad={11}><ClipText>0.94,0.94,0.94</ClipText></Value><Swatch /></ValueWrap></Prop>
              <Prop>WindowStyle<ValueWrap><Value>normal</Value></ValueWrap></Prop>
              <Prop>WindowState<ValueWrap><Value>normal</Value></ValueWrap></Prop>
            </PropList>
            <Section><Tri $open />位置</Section>
            <PropList>
              <Prop>Position<ValueWrap><Value $pad={6} $fs={15.3}>100,100,640,480</Value></ValueWrap></Prop>
              <Prop>Resize<Check><Tick /></Check></Prop>
              <Prop>AutoResizeChildren<Check><Tick /></Check></Prop>
            </PropList>
            <Section $gap={2}><Tri $open={false} />绘图</Section>
            <Section $gap={1}><Tri $open={false} />鼠标指针</Section>
            <Section><Tri $open />交互性</Section>
            <PropList>
              <Prop>Scrollable<Check /></Prop>
              <Prop>ContextMenu<ValueWrap><Value /></ValueWrap></Prop>
            </PropList>
            <Section><Tri $open={false} />回调执行控制</Section>
          </RightScroll>
          <StatusBar />
        </RightPanel>
      </Main>
      <BottomRule />
      <BottomStrip />
      <Watermark>CSDN @不会飞的J同学</Watermark>
    </Page>
  );
}
